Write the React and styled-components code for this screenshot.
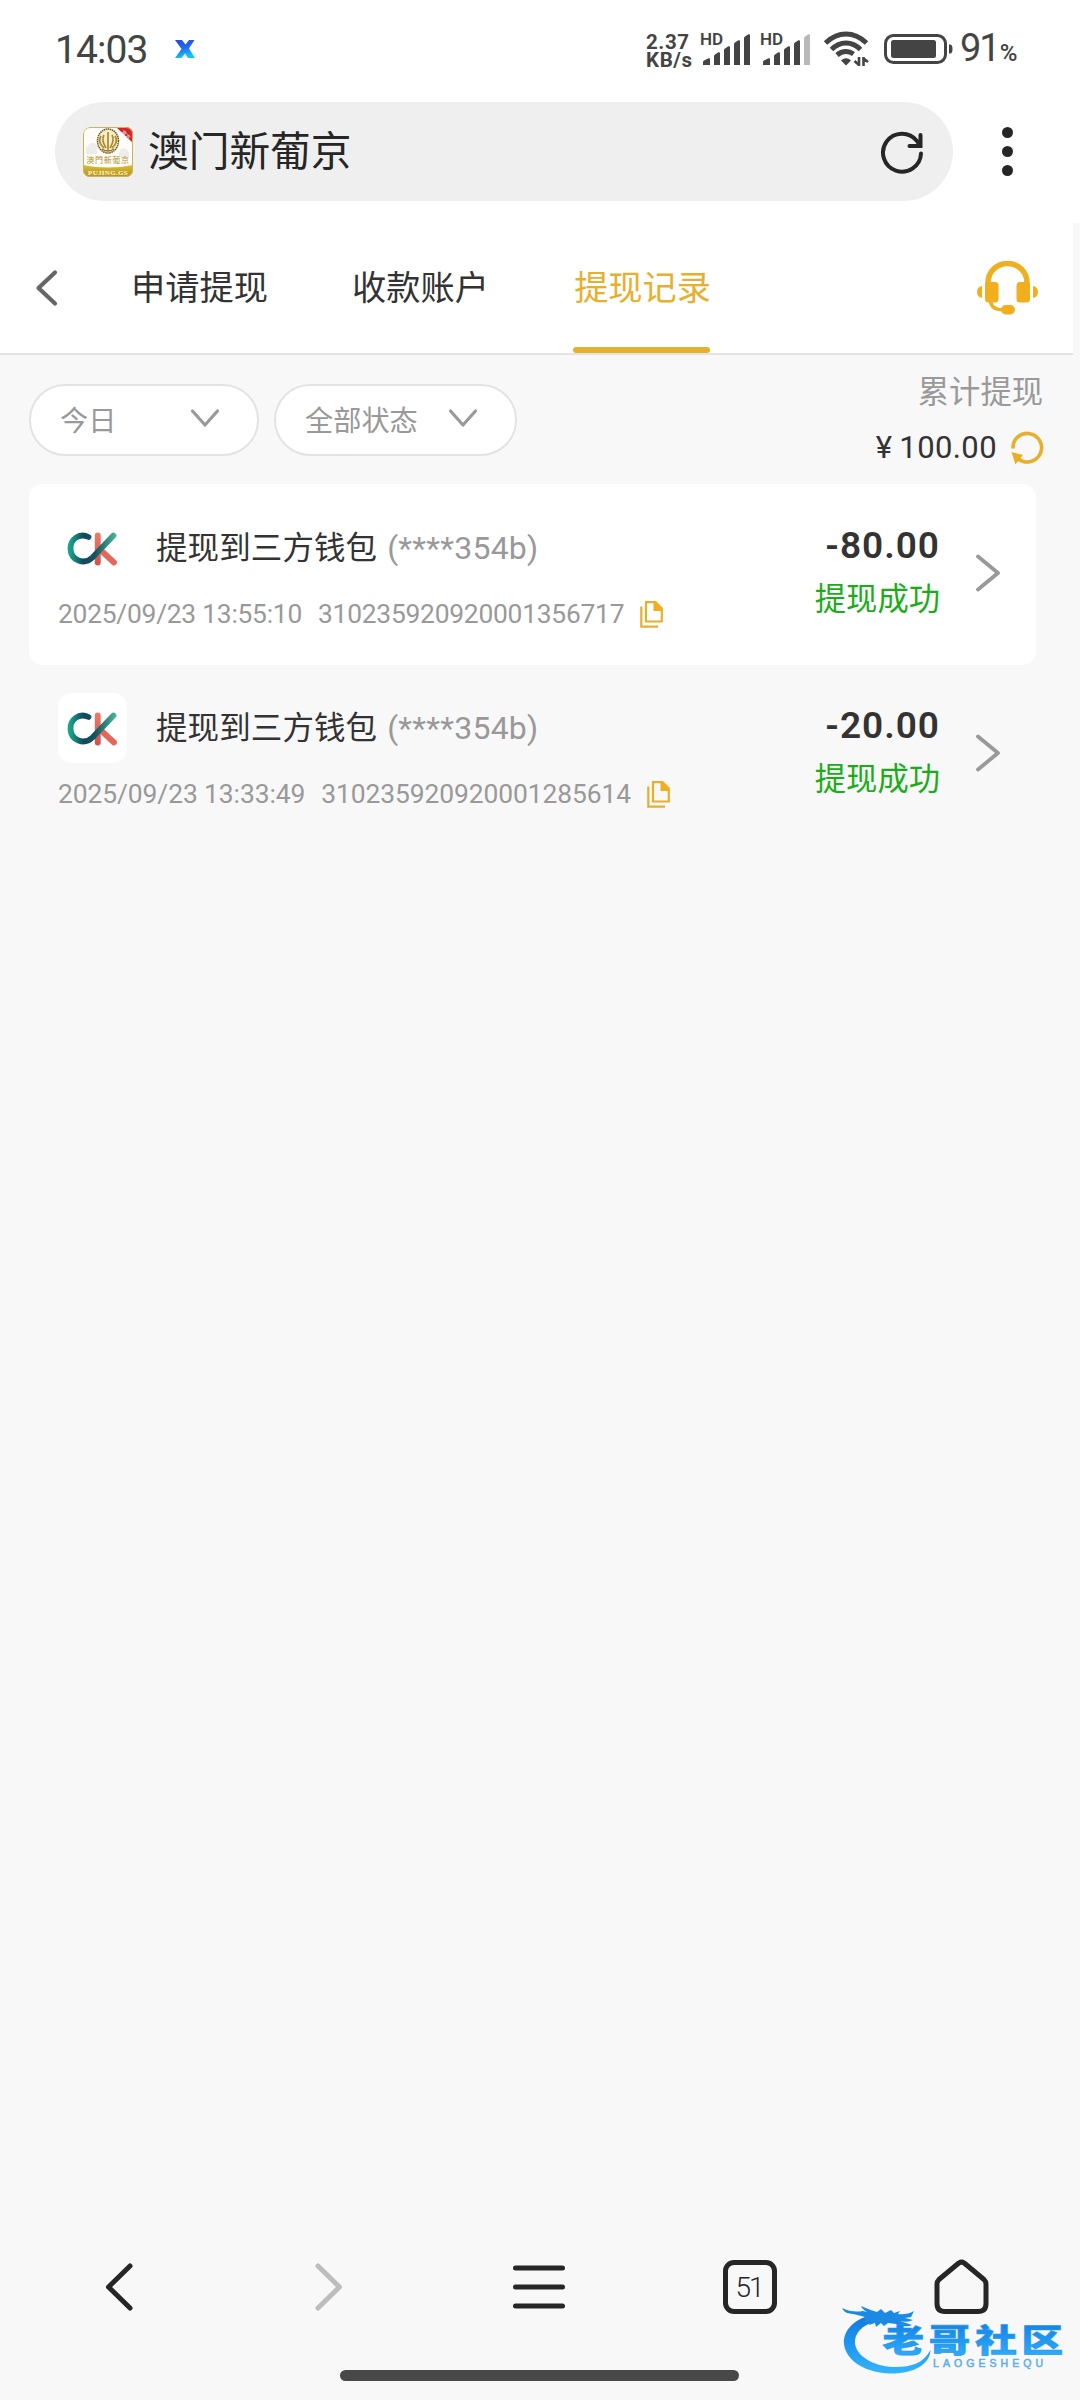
import React from 'react';
import styled, { createGlobalStyle } from 'styled-components';

const GlobalStyle = createGlobalStyle`
  * { box-sizing: border-box; }
  body { margin: 0; background: #f7f7f7; }
  svg { display: block; flex: none; }
`;

const Screen = styled.div`
  position: relative;
  width: 1080px;
  height: 2400px;
  display: flex;
  flex-direction: column;
  overflow: hidden;
  background: #f8f8f8;
  color: #333;
  font-family: Roboto, 'Noto Sans CJK SC', sans-serif;
  white-space: nowrap;
`;

/* ---------- status bar ---------- */
const StatusBar = styled.header`
  display: flex;
  align-items: center;
  height: 98px;
  padding: 0 61px 0 55px;
  background: #fff;
  color: #444;
`;
const Clock = styled.span`
  width: 120px;
  padding-top: 2px;
  font-size: 39px;
  line-height: 40px;
  letter-spacing: -0.9px;
`;
const StatusRight = styled.div`
  display: flex;
  align-items: center;
  margin-left: auto;
`;
const NetSpeed = styled.div`
  width: 57px;
  padding-top: 3px;
  font-size: 20.5px;
  font-weight: 700;
  div { height: 18px; line-height: 18px; letter-spacing: 0.6px; }
`;
const Signal = styled.div`
  position: relative;
  width: 48px;
  margin-right: 12px;
`;
const HdTag = styled.span`
  position: absolute;
  left: -3px;
  top: -3px;
  font-size: 17px;
  font-weight: 600;
  line-height: 17px;
`;
const BatteryWrap = styled.div`
  margin-left: 15px;
`;
const Percent = styled.div`
  display: flex;
  align-items: baseline;
  width: 59px;
  margin-left: 7px;
  padding-top: 2px;
  font-size: 38px;
  line-height: 40px;
  letter-spacing: -2px;
  span { font-size: 24px; font-weight: 500; margin-left: 1px; }
`;

/* ---------- browser address bar ---------- */
const AddressRow = styled.div`
  display: flex;
  align-items: center;
  height: 125px;
  padding: 4px 0 22px 55px;
  background: #fff;
`;
const AddressPill = styled.div`
  display: flex;
  align-items: center;
  width: 898px;
  height: 99px;
  padding: 0 29px 0 28px;
  border-radius: 50px;
  background: #efefef;
`;
const SiteName = styled.span`
  flex: 1;
  margin-left: 15px;
  font-size: 40.7px;
  line-height: 50px;
  color: #262626;
`;
const MoreButton = styled.div`
  display: flex;
  flex-direction: column;
  gap: 8px;
  margin-left: 48.5px;
  i { width: 11px; height: 11px; border-radius: 50%; background: #262626; }
`;

/* ---------- page tabs ---------- */
const TabHeader = styled.nav`
  display: flex;
  width: 1073px;
  height: 132px;
  padding: 0 35px 0 34px;
  align-items: stretch;
  background: #fff;
  border-bottom: 2px solid #e4e4e4;
`;
const HeaderIcon = styled.div`
  display: flex;
  align-items: center;
  ${p => p.$end && 'margin-left: auto;'}
`;
const Tabs = styled.div`
  display: flex;
  gap: 84px;
  margin-left: 72px;
`;
const Tab = styled.div`
  display: flex;
  align-items: center;
  width: 137px;
  justify-content: center;
  font-size: 34.2px;
  color: ${p => (p.$active ? '#e6b02e' : '#333')};
  border-bottom: 6px solid transparent;
  ${p => p.$active && 'padding-left: 2px;'}
  position: relative;
  &::after {
    content: '';
    display: ${p => (p.$active ? 'block' : 'none')};
    position: absolute;
    left: 0;
    right: 0;
    bottom: -6px;
    height: 6px;
    border-radius: 3px;
    background: #e6b02e;
  }
`;

/* ---------- filters ---------- */
const FilterRow = styled.section`
  display: flex;
  align-items: flex-start;
  height: 129px;
  padding: 0 36px 0 29px;
`;
const FilterPill = styled.div`
  display: flex;
  align-items: center;
  justify-content: space-between;
  width: ${p => p.$width}px;
  height: 72px;
  margin: 29px 15px 0 0;
  padding: 0 37px 4px 29px;
  border: 2px solid #e3e3e3;
  border-radius: 36px;
  background: #fff;
  font-size: 28.2px;
  color: #999;
`;
const Total = styled.div`
  margin-left: auto;
  display: flex;
  flex-direction: column;
  align-items: flex-end;
  padding-top: 17px;
`;
const TotalLabel = styled.div`
  margin-right: 1px;
  font-size: 31.3px;
  line-height: 42px;
  color: #999;
`;
const TotalValue = styled.div`
  display: flex;
  align-items: center;
  margin-top: 13px;
  font-size: 31px;
  line-height: 42px;
  letter-spacing: 0.4px;
  svg { margin-left: 14px; }
  span { margin-right: 7px; }
`;

/* ---------- records ---------- */
const RecordList = styled.main`
  display: grid;
  grid-auto-rows: 180px;
`;
const Record = styled.article`
  display: flex;
  width: 1007px;
  height: ${p => (p.$raised ? 181 : 180)}px;
  margin-left: 29px;
  padding: 29px 35px 0 29px;
  border-radius: 14px;
  background: ${p => (p.$raised ? '#fff' : 'transparent')};
`;
const RecordMain = styled.div`
  flex: 1;
`;
const RecordHead = styled.div`
  display: flex;
  align-items: center;
`;
const Logo = styled.div`
  width: 69px;
  height: 70px;
  border-radius: 14px;
  background: #fff;
`;
const RecordTitle = styled.div`
  margin: 1px 0 0 29px;
  font-size: 31.5px;
  line-height: 46px;
  letter-spacing: 0.1px;
  small { margin-left: 10px; font-size: 32px; letter-spacing: 0.2px; color: #999; }
`;
const RecordMeta = styled.div`
  display: flex;
  align-items: center;
  margin-top: 12px;
  font-size: 26.4px;
  line-height: 38px;
  letter-spacing: ${p => p.$tracking}px;
  color: #999;
  span + span { margin-left: 16px; }
  svg { margin-left: 16px; }
`;
const RecordResult = styled.div`
  display: flex;
  flex-direction: column;
  align-items: flex-end;
  padding-top: 10px;
`;
const Amount = styled.div`
  font-size: 37px;
  font-weight: 600;
  line-height: 46px;
  letter-spacing: 1px;
`;
const Outcome = styled.div`
  margin-top: 10px;
  font-size: 31.3px;
  line-height: 42px;
  color: #1aad19;
`;
const Go = styled.div`
  margin: 41px 0 0 35px;
`;

/* ---------- bottom browser bar ---------- */
const BottomBar = styled.footer`
  margin-top: auto;
  height: 183px;
`;
const NavRow = styled.div`
  display: grid;
  grid-template-columns: 210px 210px 210px 212px 210px;
  justify-items: center;
  align-items: center;
  margin-left: 14px;
  height: 140px;
`;
const TabCount = styled.div`
  width: 54px;
  height: 54px;
  padding: 0 2px 0 0;
  display: flex;
  align-items: center;
  justify-content: center;
  border: 5px solid #262626;
  border-radius: 11px;
  font-size: 28px;
  font-weight: 300;
  letter-spacing: -2px;
  color: #262626;
`;
const HomeIndicator = styled.div`
  width: 399px;
  height: 11px;
  margin: 13px 0 0 340px;
  border-radius: 6px;
  background: #484848;
`;

/* ---------- watermark ---------- */
const Watermark = styled.div`
  position: absolute;
  left: 840px;
  top: 2298px;
  width: 230px;
  height: 80px;
`;

const bars = [[0, 24, 7], [11, 18, 6], [21, 12, 6], [31, 6, 6], [41, 0, 6]];
const barPath = (x, y, w) =>
  `M${x} 31V${y + 4}Q${x} ${y + 3} ${x + 1} ${y + 2.4}L${x + w - 1.6} ${y + 0.3}Q${x + w} ${y} ${x + w} ${y + 1}V31Z`;

const SignalIcon = ({ weak }) => (
  <Signal>
    <HdTag>HD</HdTag>
    <svg width="48" height="31" viewBox="0 0 48 31">
      {bars.map(([x, y, w], i) => (
        <path key={x} d={barPath(x, y, w)} fill={weak && i === 4 ? '#b9b9b9' : '#444'} />
      ))}
    </svg>
  </Signal>
);

const WifiIcon = () => (
  <svg width="46" height="36" viewBox="0 0 46 36" fill="none" stroke="#444" strokeWidth="5">
    <path d="M2.500 12Q12 3 23 3T43.500 12" />
    <path d="M8.500 18.500Q15 12 23 12T37.500 18.500" />
    <path d="M14 24Q18 20.500 23 20.500Q27 20.500 30.500 23" />
    <path d="M18 29.500Q23 25 28 29.500L23 34.500Z" fill="#444" stroke="none" />
    <path d="M36 26V35M36 34L31.500 30M40.500 35V26M40.500 27.500L45 31" strokeWidth="2.600" />
  </svg>
);

const BatteryIcon = () => (
  <svg width="69" height="30" viewBox="0 0 69 30">
    <rect x="1.500" y="1.500" width="60" height="27" rx="8" fill="none" stroke="#444" strokeWidth="3" />
    <rect x="7" y="6" width="45" height="18" rx="2.500" fill="#444" />
    <path d="M65 10.500H66.500Q68.500 11 68.500 15T66.500 19.500H65Z" fill="#444" />
  </svg>
);

const XIcon = () => (
  <svg width="20" height="18" viewBox="0 0 20 18">
    <defs>
      <linearGradient id="xg" x1="0" y1="0" x2="0.3" y2="1">
        <stop offset="0" stopColor="#2848d8" />
        <stop offset="0.5" stopColor="#2468ee" />
        <stop offset="1" stopColor="#12c4f0" />
      </linearGradient>
    </defs>
    <path d="M0 0H7L10.500 4.500L14 0H19.500L14 8.500L20 18H13L10 13.500L6.500 18H0L6.500 9Z" fill="url(#xg)" />
  </svg>
);

const SiteIcon = () => (
  <svg width="50" height="50" viewBox="0 0 50 50">
    <defs>
      <clipPath id="siteClip"><rect width="50" height="50" rx="7" /></clipPath>
      <linearGradient id="gold" x1="0" y1="0" x2="0" y2="1">
        <stop offset="0" stopColor="#d9bc35" />
        <stop offset="1" stopColor="#b8901a" />
      </linearGradient>
    </defs>
    <g clipPath="url(#siteClip)">
      <rect width="50" height="50" fill="#fdfcf8" />
      <path d="M3 22Q8 12 14 18V27H3ZM36 25Q40 17 46 25V30H36Z" fill="#eeecea" />
      <path d="M0 38Q25 43 50 38V50H0Z" fill="url(#gold)" />
      <path d="M33 0H50V16Z" fill="#d3242b" />
      <text x="0" y="0" transform="translate(38 5.800) rotate(43)" fontSize="5" fill="#fff" fontFamily="Noto Sans CJK SC">官方</text>
      <ellipse cx="25" cy="14" rx="10.500" ry="12" fill="#f8edc4" stroke="#6d5820" strokeWidth="1.500" strokeDasharray="1.500 0.600" />
      <path d="M25 5V23M21 8Q18 13 23 21M29 8Q32 13 27 21M18 9Q14 15 21 21M32 9Q36 15 29 21" fill="none" stroke="#ad8730" strokeWidth="1.700" />
      <path d="M19 22Q25 26 31 22" fill="none" stroke="#927026" strokeWidth="1.500" />
      <text x="25" y="35.500" textAnchor="middle" fontSize="8" letterSpacing="0.700" fill="#b39024" fontFamily="Noto Sans CJK TC">澳門新葡京</text>
      <text x="25" y="47.500" textAnchor="middle" fontSize="7" fontWeight="700" letterSpacing="0.300" fill="#fff8d8" fontFamily="Liberation Serif">PUJING.GS</text>
      <rect x="0.500" y="0.500" width="49" height="49" rx="6.500" fill="none" stroke="#cfb35a" strokeWidth="1" />
    </g>
  </svg>
);

const ReloadIcon = () => (
  <svg width="44" height="44" viewBox="0 0 44 44" fill="none" stroke="#262626" strokeWidth="4" strokeLinecap="round" strokeLinejoin="miter">
    <path d="M41 23.500A19 19 0 1 1 37 11L39.500 15" />
    <path d="M40.500 5V16H29.500" />
  </svg>
);

const HeadsetIcon = () => (
  <svg width="61" height="54" viewBox="0 0 61 54">
    <path d="M11 26V21.500A19.500 19 0 0 1 50 21.500V26" fill="none" stroke="#eeb021" strokeWidth="5.500" />
    <rect x="8" y="21" width="13.500" height="20.500" rx="3.500" fill="#f1ae1d" />
    <rect x="39.500" y="21" width="13.500" height="20.500" rx="3.500" fill="#f1ae1d" />
    <path d="M5 25V37Q0 36 0 31T5 25ZM56 25V37Q61 36 61 31T56 25Z" fill="#f1ae1d" />
    <path d="M13.500 40Q14 48.500 26 49" fill="none" stroke="#f1ae1d" strokeWidth="3.500" />
    <rect x="24" y="44" width="14" height="9.500" rx="4.700" fill="#f1ae1d" />
  </svg>
);

const Chevron = ({ w, h, d, color, stroke }) => (
  <svg width={w} height={h} viewBox={`0 0 ${w} ${h}`} fill="none" stroke={color} strokeWidth={stroke} strokeLinecap="round" strokeLinejoin="round">
    <path d={d} />
  </svg>
);
const DownIcon = () => <Chevron w={30} h={20} d="M2.500 3L15 17L27.500 3" color="#999" stroke={3.2} />;

const SyncIcon = () => (
  <svg width="33" height="34" viewBox="0 0 33 34">
    <path d="M2 17.500A14.300 14.300 0 1 1 7.500 28" fill="none" stroke="#e6b02e" strokeWidth="3.600" />
    <path d="M0.500 21L12 24L4.500 33.500Z" fill="#eeae1c" />
  </svg>
);

const CopyIcon = () => (
  <svg width="24" height="27" viewBox="0 0 24 27" fill="none" stroke="#e6b02e" strokeWidth="2.200">
    <path d="M6 1.200H15.500L21.800 7.500V20.500H6Z" />
    <path d="M13.500 1H16L22 7.500V10H13.500Z" fill="#f1ae1d" stroke="none" />
    <path d="M1.300 5.500V25.700H18" />
  </svg>
);

const WalletLogo = () => (
  <Logo>
    <svg width="69" height="70" viewBox="8 3 69 70" fill="none" strokeLinecap="round" strokeWidth="5.800">
      <defs>
        <linearGradient id="cg" gradientUnits="userSpaceOnUse" x1="20" y1="36" x2="65" y2="36">
          <stop offset="0" stopColor="#18a38c" />
          <stop offset="0.300" stopColor="#114a5c" />
          <stop offset="0.550" stopColor="#15515f" />
          <stop offset="1" stopColor="#48b296" />
        </linearGradient>
        <linearGradient id="kg" x1="0" y1="0" x2="0" y2="1">
          <stop offset="0" stopColor="#ef7b66" />
          <stop offset="1" stopColor="#d0524b" />
        </linearGradient>
      </defs>
      <rect x="44.800" y="22.500" width="5.900" height="33" rx="2.900" fill="url(#kg)" />
      <path d="M50 39.500L64 52.500" stroke="#e4685a" />
      <path d="M38.500 27C29 22.500 20 29.500 20.500 39C21 50.500 34 55.500 42.500 47.500L63.500 25.500" stroke="url(#cg)" />
    </svg>
  </Logo>
);

const HomeIcon = () => (
  <svg width="55" height="56" viewBox="0 0 55 56" fill="none" stroke="#262626" strokeWidth="5" strokeLinejoin="round">
    <path d="M24.800 4Q27.500 2.300 30.200 4L50 20.500Q52 22.500 52 25V44.500Q52 52.500 44 52.500H11Q3 52.500 3 44.500V25Q3 22.500 5 20.500Z" />
  </svg>
);

const MenuIcon = () => (
  <svg width="52" height="44" viewBox="0 0 52 44" stroke="#262626" strokeWidth="5" strokeLinecap="round">
    <path d="M2.500 3H49.500M2.500 22H49.500M2.500 41H49.500" />
  </svg>
);

const WatermarkArt = () => (
  <svg width="230" height="80" viewBox="0 0 230 80">
    <defs>
      <linearGradient id="wm" x1="0" y1="0" x2="0" y2="1">
        <stop offset="0" stopColor="#1478dc" />
        <stop offset="0.500" stopColor="#1e96f0" />
        <stop offset="1" stopColor="#34b4fc" />
      </linearGradient>
    </defs>
    <path d="M31 17C12 22 3 34 4 46C6 63 26 75 50 75.500C74 76 90 66 90.500 52C83 66 70 69.500 53 69C33 68 16 58 15 45C14 35 23 27 34 24Z" fill="url(#wm)" />
    <path d="M2 10Q12 15 23 13L27 14Q22 11 21 8Q30 12 37 14L41 11L45 15L51 12L54 15L60 13L58 16Q67 17 74 13L71 19L65 20L73 22Q68 25 60 23L72 27Q66 30 56 26L48 25L44 28L41 25L36 29L35 25L29 27L30 23L25 25L25 19Q15 16 7 15Q3 13 2 10Z" fill="#1a8ae4" />
    <g transform="translate(42.500 0) scale(1.320 1)" fill="url(#wm)" stroke="#2a98ee" strokeWidth="0.700">
      <text x="0" y="54.300" fontSize="31.500" fontWeight="900" letterSpacing="3.600" fontFamily="Noto Sans CJK SC">老哥社区</text>
    </g>
    <text x="93" y="69" fontSize="10.500" fontFamily="Liberation Sans" textLength="110" lengthAdjust="spacing" fill="#5aaef0" stroke="#5aaef0" strokeWidth="0.500">LAOGESHEQU</text>
  </svg>
);

const records = [
  { time: '2025/09/23 13:55:10', order: '310235920920001356717', amount: '-80.00', tracking: -0.25 },
  { time: '2025/09/23 13:33:49', order: '310235920920001285614', amount: '-20.00', tracking: -0.08 },
];

export default function App() {
  return (
    <>
      <GlobalStyle />
      <Screen>
        <StatusBar>
          <Clock>14:03</Clock>
          <XIcon />
          <StatusRight>
            <NetSpeed><div>2.37</div><div>KB/s</div></NetSpeed>
            <SignalIcon />
            <SignalIcon weak />
            <WifiIcon />
            <BatteryWrap><BatteryIcon /></BatteryWrap>
            <Percent>91<span>%</span></Percent>
          </StatusRight>
        </StatusBar>

        <AddressRow>
          <AddressPill>
            <SiteIcon />
            <SiteName>澳门新葡京</SiteName>
            <ReloadIcon />
          </AddressPill>
          <MoreButton><i /><i /><i /></MoreButton>
        </AddressRow>

        <TabHeader>
          <HeaderIcon>
            <Chevron w={25} h={38} d="M21 3.500L4.500 19L21 34.500" color="#666" stroke={4.2} />
          </HeaderIcon>
          <Tabs>
            <Tab>申请提现</Tab>
            <Tab>收款账户</Tab>
            <Tab $active>提现记录</Tab>
          </Tabs>
          <HeaderIcon $end><HeadsetIcon /></HeaderIcon>
        </TabHeader>

        <FilterRow>
          <FilterPill $width={230}>今日<DownIcon /></FilterPill>
          <FilterPill $width={243}>全部状态<DownIcon /></FilterPill>
          <Total>
            <TotalLabel>累计提现</TotalLabel>
            <TotalValue><span>¥</span>100.00<SyncIcon /></TotalValue>
          </Total>
        </FilterRow>

        <RecordList>
          {records.map((r, i) => (
            <Record key={r.order} $raised={i % 2 === 0}>
              <RecordMain>
                <RecordHead>
                  <WalletLogo />
                  <RecordTitle>提现到三方钱包<small>(****354b)</small></RecordTitle>
                </RecordHead>
                <RecordMeta $tracking={r.tracking}>
                  <span>{r.time}</span>
                  <span>{r.order}</span>
                  <CopyIcon />
                </RecordMeta>
              </RecordMain>
              <RecordResult>
                <Amount>{r.amount}</Amount>
                <Outcome>提现成功</Outcome>
              </RecordResult>
              <Go>
                <Chevron w={26} h={38} d="M3 2.500L23 19L3 35.500" color="#999" stroke={3.8} />
              </Go>
            </Record>
          ))}
        </RecordList>

        <BottomBar>
          <NavRow>
            <Chevron w={28} h={50} d="M25 4L3.500 25L25 46" color="#262626" stroke={5} />
            <Chevron w={28} h={50} d="M3 4L24.500 25L3 46" color="#bdbdbd" stroke={5} />
            <MenuIcon />
            <TabCount>51</TabCount>
            <HomeIcon />
          </NavRow>
          <HomeIndicator />
        </BottomBar>

        <Watermark><WatermarkArt /></Watermark>
      </Screen>
    </>
  );
}
